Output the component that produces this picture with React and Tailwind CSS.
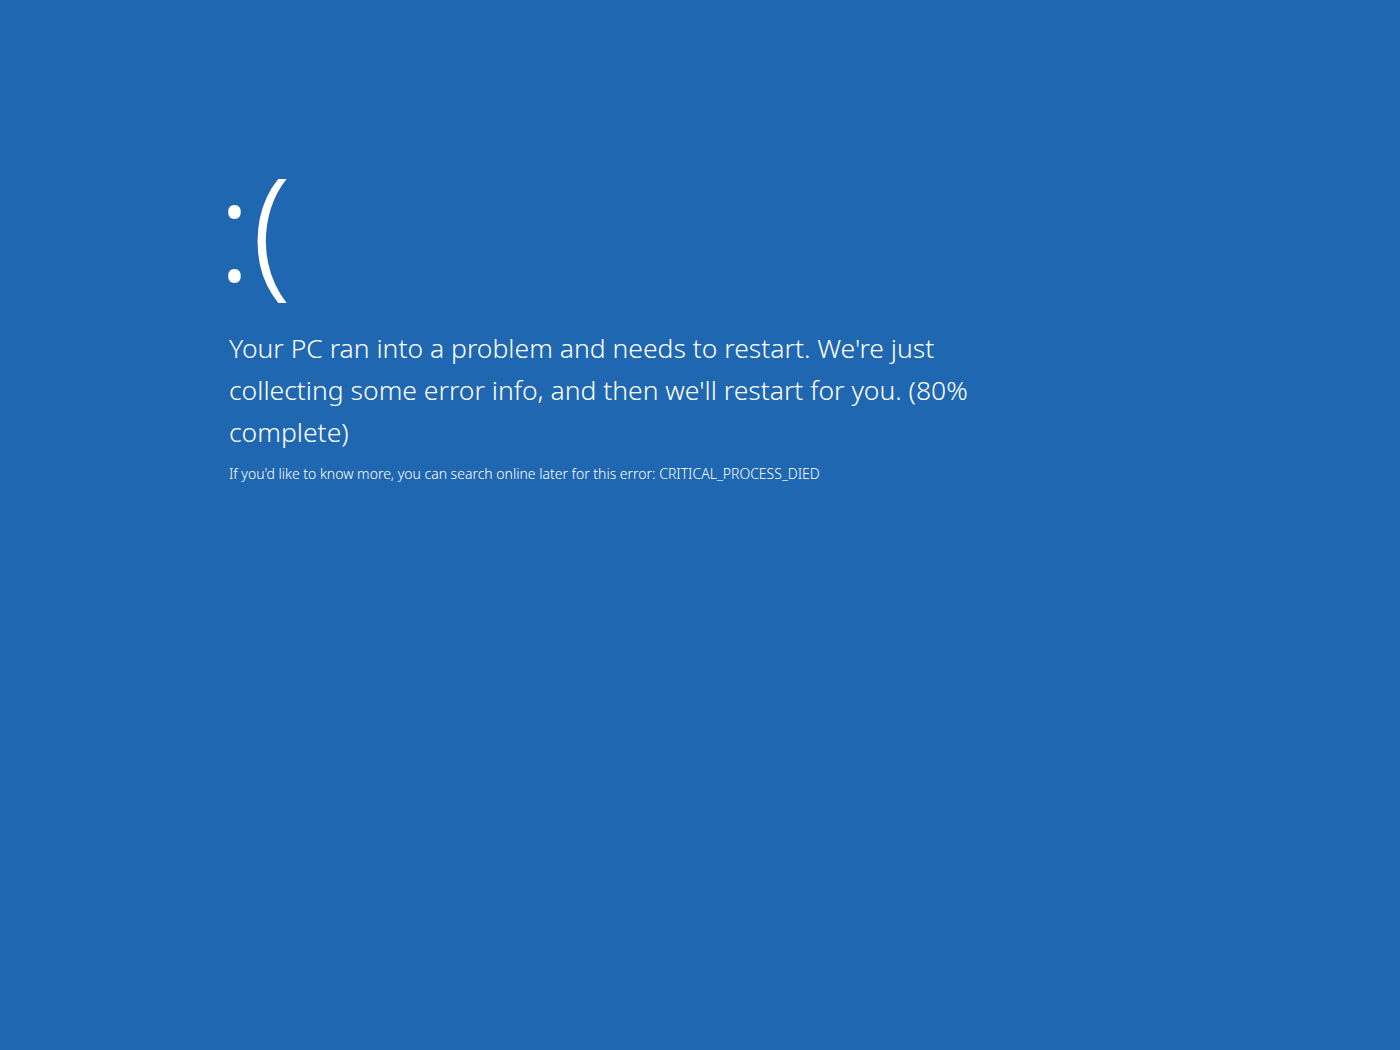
export default function App() {
  return (
    <div
      className="w-[1400px] h-[1050px] bg-[#2067b2] text-white overflow-hidden"
      style={{ fontFamily: '"Segoe UI", "Noto Sans", "Open Sans", sans-serif' }}
    >
      <div className="pl-[229px] pt-[136px] flex flex-col">
        <div className="-ml-[12px] text-[142px] leading-[180px] font-light h-[180px]">:(</div>
        <div className="mt-[11px] w-[752px] text-[26.5px] leading-[42px] font-light">
          Your PC ran into a problem and needs to restart. We're just collecting some error info, and then we'll restart for you. (80% complete)
        </div>
        <div className="mt-[11px] text-[14px] leading-[20px] font-light">
          If you'd like to know more, you can search online later for this error: CRITICAL_PROCESS_DIED
        </div>
      </div>
    </div>
  );
}
